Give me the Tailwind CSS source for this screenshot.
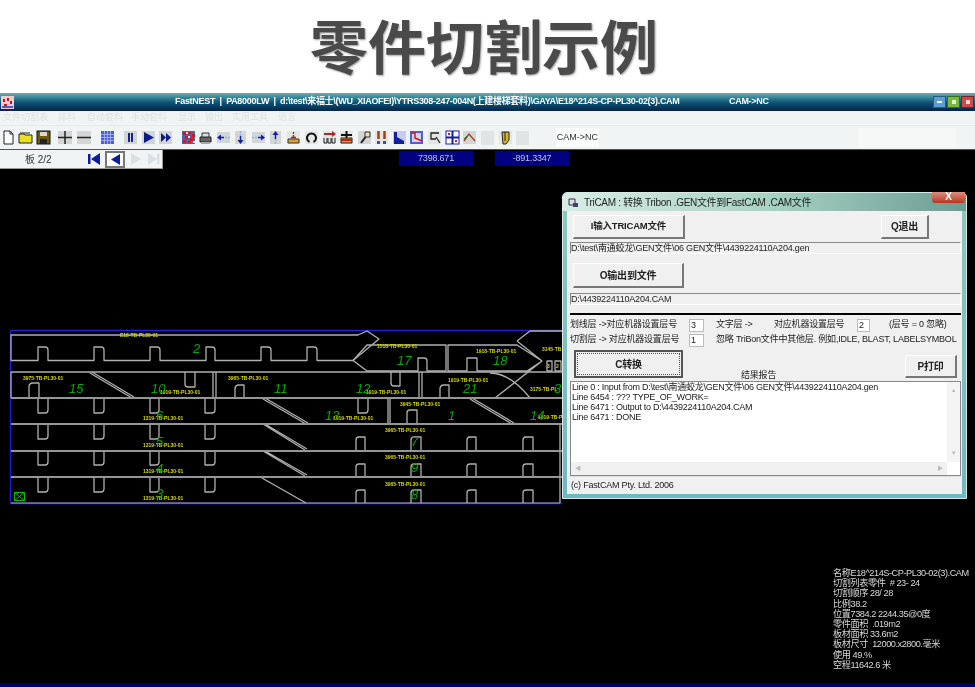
<!DOCTYPE html>
<html lang="zh">
<head>
    <meta charset="UTF-8">
    <meta name="viewport" content="width=device-width, initial-scale=1.0">
    <title>零件切割示例</title>
    <script src="https://cdn.jsdelivr.net/npm/@tailwindcss/browser@4"></script>
</head>
<body class="w-[975px] h-[687px] overflow-hidden bg-white font-['Liberation_Sans','Noto_Sans_CJK_SC',sans-serif]">
<div class="flex flex-col h-[687px]">

    <!-- page heading -->
    <h1 class="h-[93px] flex items-center justify-center pr-[7px] pt-[4px] text-[58px] leading-none font-bold text-[#4a4a4a] [text-shadow:1px_1px_2px_#999]">零件切割示例</h1>

    <!-- FastNEST window -->
    <div class="flex-1 flex flex-col min-h-0 blur-[0.45px]">
        <div class="h-[18px] flex items-center bg-gradient-to-b from-[#63b4b4] via-[#0e5878] to-[#04234a] text-white text-[9px] font-bold">
            <svg class="w-[13px] h-[13px] ml-[1px]" viewBox="0 0 13 13"><rect width="13" height="13" fill="#f3c8d0"/><path d="M2 3h2v3H2zM6 2h2v3H6zM9 5h2v3H9zM3 8h3v2H3z" fill="#c01818"/><path d="M1 10h11v2H1z" fill="#5060c0"/></svg>
            <span class="ml-[161px] whitespace-nowrap w-[554px] tracking-[-0.3px]">FastNEST &nbsp;|&nbsp; PA8000LW &nbsp;|&nbsp; d:\test\来福士\(WU_XIAOFEI)\YTRS308-247-004N(上建楼梯套料)\GAYA\E18^214S-CP-PL30-02(3).CAM</span>
            <span class="tracking-[-0.3px]">CAM-&gt;NC</span>
            <div class="ml-auto mr-[1px] flex gap-px">
                <span class="w-[13px] h-[12px] bg-[#5a9fd0] border border-[#2a5a80] flex items-center justify-center"><i class="w-[5px] h-[2px] bg-white"></i></span>
                <span class="w-[13px] h-[12px] bg-[#7ab840] border border-[#3a7020] flex items-center justify-center"><i class="w-[4px] h-[4px] bg-white/80"></i></span>
                <span class="w-[13px] h-[12px] bg-[#d04848] border border-[#802020] flex items-center justify-center"><i class="w-[4px] h-[4px] bg-white/80"></i></span>
            </div>
        </div>

        <div class="h-[15px] flex items-center bg-[#f0f4f5] text-[9px] text-[#dde2e4] pl-[3px] border-b border-[#e6eaea]">
            <span class="w-[55px]">文件切割表</span><span class="w-[29px]">排料</span><span class="w-[44px]">自动套料</span><span class="w-[47px]">手动套料</span><span class="w-[27px]">显示</span><span class="w-[27px]">输出</span><span class="w-[46px]">实用工具</span><span>语言</span>
        </div>

        <div class="h-[23px] flex items-center bg-[#f0f4f5] pl-[1px]">
            <svg class="w-[15px] h-[15px]" viewBox="0 0 15 15"><path d="M3 1h6l3 3v10H3z" fill="#fff" stroke="#222"/><path d="M9 1v3h3" fill="none" stroke="#222"/></svg>
            <svg class="w-[15px] h-[15px] ml-[2px]" viewBox="0 0 15 15"><path d="M1 4h5l1 1h7v8H1z" fill="#e8e020" stroke="#222"/><path d="M2 3h10" stroke="#222"/></svg>
            <svg class="w-[15px] h-[15px] ml-[3px]" viewBox="0 0 15 15"><rect x="1" y="1" width="13" height="13" fill="#6b5a10" stroke="#111"/><rect x="4" y="2" width="7" height="4" fill="#d8d8c8"/><rect x="4" y="9" width="7" height="5" fill="#222"/></svg>
            <svg class="w-[16px] h-[15px] ml-[6px]" viewBox="0 0 16 15"><rect x="1" y="1" width="14" height="13" fill="#d4d6d6"/><path d="M1 7.500h14M8 1v13" stroke="#222" stroke-width="1.5"/></svg>
            <svg class="w-[16px] h-[15px] ml-[3px]" viewBox="0 0 16 15"><rect x="1" y="1" width="14" height="13" fill="#d4d6d6"/><path d="M1 7.500h14" stroke="#222" stroke-width="1.5"/></svg>
            <svg class="w-[15px] h-[15px] ml-[8px]" viewBox="0 0 15 15"><rect x="1" y="1" width="13" height="13" fill="#5060d8"/><path d="M1 4.500h13M1 7.500h13M1 10.500h13M4.500 1v13M7.500 1v13M10.500 1v13" stroke="#b0b8f0" stroke-width=".8"/></svg>
            <svg class="w-[15px] h-[15px] ml-[8px]" viewBox="0 0 15 15"><rect x="1" y="1" width="13" height="13" fill="#d4d6d6"/><path d="M5 3h2v9H5zM8 3h2v9H8z" fill="#1820a0"/></svg>
            <svg class="w-[15px] h-[15px] ml-[3px]" viewBox="0 0 15 15"><rect x="1" y="1" width="13" height="13" fill="#d4d6d6"/><path d="M3 2l10 5.500-10 5.500z" fill="#0c1c88"/></svg>
            <svg class="w-[15px] h-[15px] ml-[2px]" viewBox="0 0 15 15"><rect x="1" y="1" width="13" height="13" fill="#d4d6d6"/><path d="M3 3l5 4.500-5 4.500zM8 3l5 4.500-5 4.500z" fill="#0c1c88"/></svg>
            <svg class="w-[15px] h-[15px] ml-[8px]" viewBox="0 0 15 15"><rect x="1" y="1" width="13" height="13" fill="#5060b0"/><path d="M2 2h3v3H2zM7 2h3v2H7zM11 4h3v3h-3zM4 6h3v3H4zM9 8h3v3H9zM2 10h3v3H2zM7 11h3v2H7z" fill="#d01818"/><path d="M5 2h2v2H5zM7 6h2v2H7zM12 11h2v2h-2z" fill="#f0d0d0"/></svg>
            <svg class="w-[15px] h-[15px] ml-[2px]" viewBox="0 0 15 15"><path d="M2 7h11v5H2z" fill="#666" stroke="#222"/><path d="M4 3h7v4H4z" fill="#ddd" stroke="#333"/><path d="M3 12h9v2H3z" fill="#aaa"/></svg>
            <svg class="w-[15px] h-[15px] ml-[3px]" viewBox="0 0 15 15"><rect x="1" y="2" width="13" height="11" fill="#d4d6d6"/><path d="M14 7.500H8" stroke="#7ac0e0" stroke-width="1.500" stroke-dasharray="2 1"/><path d="M8 7.500H4" stroke="#1020a0" stroke-width="1.500"/><path d="M1 7.500l4-3v6z" fill="#1020a0"/></svg>
            <svg class="w-[15px] h-[15px] ml-[2px]" viewBox="0 0 15 15"><rect x="2" y="1" width="11" height="13" fill="#d4d6d6"/><path d="M7.500 1v5" stroke="#7ac0e0" stroke-width="1.500" stroke-dasharray="2 1"/><path d="M7.500 6v4" stroke="#1020a0" stroke-width="1.500"/><path d="M7.500 14l-3-4h6z" fill="#1020a0"/></svg>
            <svg class="w-[15px] h-[15px] ml-[3px]" viewBox="0 0 15 15"><rect x="1" y="2" width="13" height="11" fill="#d4d6d6"/><path d="M1 7.500h6" stroke="#7ac0e0" stroke-width="1.500" stroke-dasharray="2 1"/><path d="M7 7.500h4" stroke="#1020a0" stroke-width="1.500"/><path d="M14 7.500l-4-3v6z" fill="#1020a0"/></svg>
            <svg class="w-[15px] h-[15px] ml-[2px]" viewBox="0 0 15 15"><rect x="2" y="1" width="11" height="13" fill="#d4d6d6"/><path d="M7.500 14V9" stroke="#7ac0e0" stroke-width="1.500" stroke-dasharray="2 1"/><path d="M7.500 9V5" stroke="#1020a0" stroke-width="1.500"/><path d="M7.500 1l-3 4h6z" fill="#1020a0"/></svg>
            <svg class="w-[15px] h-[15px] ml-[3px]" viewBox="0 0 15 15"><rect x="1" y="1" width="13" height="13" fill="#e4e6e6"/><path d="M2 9h11v4H2z" fill="#e0a030" stroke="#333"/><path d="M7.500 2v2M7.500 5v2M5 7.500h5" stroke="#a02020" stroke-width="1.300"/></svg>
            <svg class="w-[15px] h-[15px] ml-[3px]" viewBox="0 0 15 15"><rect x="1" y="1" width="13" height="13" fill="#e4e6e6"/><path d="M5.500 12A4.500 4.500 0 1 1 9.500 12" fill="none" stroke="#111" stroke-width="2"/></svg>
            <svg class="w-[15px] h-[15px] ml-[3px]" viewBox="0 0 15 15"><rect x="1" y="1" width="13" height="13" fill="#e4e6e6"/><path d="M2 4h8" stroke="#c02020" stroke-width="2"/><path d="M14 4l-4-3v6z" fill="#c02020"/><path d="M2 8v5h3V8M6 8v5h3V8M10 8v5h3V8" fill="none" stroke="#222"/></svg>
            <svg class="w-[15px] h-[15px] ml-[2px]" viewBox="0 0 15 15"><rect x="1" y="1" width="13" height="13" fill="#e4e6e6"/><path d="M7.500 1v7M2 5h11" stroke="#111" stroke-width="2"/><path d="M2 8h11v5H2z" fill="#e0a020" stroke="#222"/><path d="M2 10h11" stroke="#c02020" stroke-width="2"/></svg>
            <svg class="w-[15px] h-[15px] ml-[3px]" viewBox="0 0 15 15"><rect x="1" y="1" width="13" height="13" fill="#d4d6d6"/><path d="M4 13l6-8" stroke="#222" stroke-width="2"/><path d="M8 2h5v5H8z" fill="#e8e0b0" stroke="#333"/></svg>
            <svg class="w-[15px] h-[15px] ml-[2px]" viewBox="0 0 15 15"><rect x="1" y="1" width="13" height="13" fill="#e4e6e6"/><path d="M4.500 1v8M10.500 1v8" stroke="#a04010" stroke-width="2.500"/><path d="M3 11h3v3H3zM9 11h3v3H9z" fill="#3050c0"/></svg>
            <svg class="w-[15px] h-[15px] ml-[3px]" viewBox="0 0 15 15"><rect x="1" y="1" width="13" height="13" fill="#c8ccf0"/><path d="M2 2h3v5l7 4v3H2z" fill="#1020a0"/></svg>
            <svg class="w-[15px] h-[15px] ml-[2px]" viewBox="0 0 15 15"><rect x="1" y="1" width="13" height="13" fill="#5060d0"/><rect x="3" y="3" width="9" height="9" fill="#d0d4f0"/><path d="M2 3h4v5l7 3" fill="none" stroke="#d01818" stroke-width="1.500"/></svg>
            <svg class="w-[15px] h-[15px] ml-[3px]" viewBox="0 0 15 15"><rect x="1" y="1" width="13" height="13" fill="#e4e6e6"/><path d="M12 3H4v6h5M9 7l4 6" fill="none" stroke="#222" stroke-width="1.300"/></svg>
            <svg class="w-[15px] h-[15px] ml-[3px]" viewBox="0 0 15 15"><rect x="1" y="1" width="13" height="13" fill="#fff" stroke="#1020a0"/><path d="M1 7.500h13M7.500 1v13" stroke="#1020a0" stroke-width="2"/><rect x="3" y="3" width="2" height="2" fill="#d01818"/><rect x="10" y="10" width="2" height="2" fill="#d01818"/></svg>
            <svg class="w-[15px] h-[15px] ml-[2px]" viewBox="0 0 15 15"><rect x="1" y="1" width="13" height="13" fill="#d4d6d6"/><path d="M2 11l5-7 6 7" fill="none" stroke="#a04010" stroke-width="1.300"/><path d="M2 9l3-3" stroke="#208020"/></svg>
            <span class="w-[13px] h-[14px] ml-[4px] bg-[#dfe4e4]"></span>
            <svg class="w-[15px] h-[15px] ml-[4px]" viewBox="0 0 15 15"><rect x="1" y="1" width="13" height="13" fill="#e4e6e6"/><path d="M4 2h7v8l-3 4H5z" fill="#d8b820" stroke="#222"/><path d="M7 2v9" stroke="#222"/></svg>
            <span class="w-[13px] h-[14px] ml-[3px] bg-[#dfe4e4]"></span>
            <span class="w-[43px] h-[19px] ml-[27px] flex items-center justify-center bg-[#fafbfb] text-[9px] text-[#333] whitespace-nowrap">CAM-&gt;NC</span>
            <span class="w-[98px] h-[20px] ml-[259px] bg-[#f6f8f8]"></span>
        </div>

        <!-- black nesting canvas -->
        <div class="flex-1 relative bg-black border-t border-[#555] min-h-0 border-b-[4px] border-b-[#000060]">
            <div class="absolute left-0 top-0 w-[163px] h-[19px] bg-[#f0f4f5] flex items-center border-r border-b border-[#999]">
                <span class="ml-[25px] w-[62px] text-[10px] text-[#333]">板 2/2</span>
                <svg class="w-[14px] h-[12px]" viewBox="0 0 14 12"><path d="M1 1h2.500v10H1zM13 0v12L4 6z" fill="#0c1ca0"/></svg>
                <span class="ml-[4px] w-[20px] h-[17px] flex items-center justify-center border-2 border-[#777] bg-white"><svg class="w-[11px] h-[11px]" viewBox="0 0 11 11"><path d="M10 0v11L1 5.500z" fill="#0c1ca0"/></svg></span>
                <svg class="w-[12px] h-[12px] ml-[5px]" viewBox="0 0 12 12"><path d="M1 0v12l10-6z" fill="#d8e2e4"/></svg>
                <svg class="w-[14px] h-[12px] ml-[5px]" viewBox="0 0 14 12"><path d="M1 0v12l9-6zM10 1h2.500v10H10z" fill="#d8e2e4"/></svg>
            </div>
            <div class="absolute left-[399px] top-[1px] w-[74px] h-[15px] bg-[#000080] text-[#c0c0d8] text-[9px] text-center leading-[14px] tracking-[-0.2px]">7398.671</div>
            <div class="absolute left-[495px] top-[1px] w-[74px] h-[15px] bg-[#000080] text-[#c0c0d8] text-[9px] text-center leading-[14px] tracking-[-0.2px]">-891.3347</div>

            <!-- nested parts, positions are the content -->
            <svg class="absolute left-0 top-[-149px]" width="975" height="687" viewBox="0 0 975 687">
                <path d="M10.500 329.500H562M10.500 329.500V502.500H562" fill="none" stroke="#2020d8" stroke-width="1.300"/>
                <g fill="none" stroke="#b0b0b0" stroke-width="1.300" stroke-linejoin="round">
                    <path d="M11 334H358L367 330 379 338 353 359.500H317V349Q317 346 314 346H307V359.500H271V349Q271 346 268 346H261V359.500H215V349Q215 346 212 346H206V359.500H160V349Q160 346 157 346H150V359.500H104V349Q104 346 101 346H94V359.500H48V349Q48 346 45 346H38V359.500H11Z"/>
                    <path d="M353 359.500L367 344H446V370H427V360Q427 357 424 357H418V370H367L353 359.500"/>
                    <path d="M448 344V370H467V357H477V370H527L542 360 517 344ZM517 340L530 330H562M517 340L542 360 495 397M490 372Q510 372 530 397"/>
                    <path d="M11 371H562M11 371V397M213 371V397M216 371V397M419 371V397M422 371V397M185 371V383Q185 386 188 386H195V371M391 371V382Q391 385 394 385H400V371"/>
                    <path d="M90 372L132 397M92 371L134 396M470 398L512 423M472 397L514 422"/>
                    <path d="M29 397V386Q29 382 33 382H39V397M235 397V388Q235 384 239 384H244V397M440 397V388Q440 384 444 384H449V397"/>
                    <path d="M388 397V423M390 397V423M407 423V412Q407 409 410 409H417V423"/>
                    <path d="M38 397V412H45Q48 412 48 409V397M94 397V412H101Q104 412 104 409V397M150 397V412H156Q159 412 159 409V397M205 397V412H212Q215 412 215 409V397M358 398V412H365Q368 412 368 409V398"/>
                    <path d="M38 423V438H45Q48 438 48 435V423M94 423V438H101Q104 438 104 435V423M150 423V438H156Q159 438 159 435V423M205 423V438H212Q215 438 215 435V423"/>
                    <path d="M38 450V464H45Q48 464 48 461V450M94 450V464H101Q104 464 104 461V450M150 450V464H156Q159 464 159 461V450M205 450V464H212Q215 464 215 461V450"/>
                    <path d="M38 476V491H45Q48 491 48 488V476M94 476V491H101Q104 491 104 488V476M150 476V491H156Q159 491 159 488V476M205 476V491H212Q215 491 215 488V476"/>
                    <path d="M356 450V439Q356 436 359 436H365V450M411 450V439Q411 436 414 436H421V450M467 450V439Q467 436 470 436H476V450M523 450V439Q523 436 526 436H533V450"/>
                    <path d="M356 476V466Q356 463 359 463H365V476M411 476V466Q411 463 414 463H421V476M467 476V466Q467 463 470 463H476V476M523 476V466Q523 463 526 463H533V476"/>
                    <path d="M356 502V492Q356 489 359 489H365V502M411 502V492Q411 489 414 489H421V502M467 502V492Q467 489 470 489H476V502M523 502V492Q523 489 526 489H533V502"/>
                    <path d="M263 398L306 423M265 397L308 422M263 423L305 449M265 423L307 448M263 450L305 475M265 450L307 474M262 477L306 502"/>
                    <path d="M560 423V502M547 360h5v10h-5zM555 360h6v10h-6z"/>
                </g>
                <path d="M11 397H562M11 423H562M11 450H562M11 476H562" stroke="#969696" stroke-width="2"/>
                <path d="M11 502H560" stroke="#b0b0b0"/>
                <g fill="#d8d800" font-size="5" font-weight="bold" font-family="Liberation Sans">
                    <text x="120" y="336">E18-TB-PL30-01</text><text x="377" y="347">1518-TB-PL30-01</text><text x="476" y="352">1918-TB-PL30-01</text><text x="542" y="350">3145-TB</text>
                    <text x="23" y="379">3975-TB-PL30-01</text><text x="228" y="379">3965-TB-PL30-01</text><text x="448" y="381">1919-TB-PL30-01</text><text x="530" y="390">3175-TB-PL</text>
                    <text x="160" y="393">1919-TB-PL30-01</text><text x="366" y="393">1919-TB-PL30-01</text><text x="400" y="405">3945-TB-PL30-01</text>
                    <text x="143" y="419">1319-TB-PL30-01</text><text x="333" y="419">1919-TB-PL30-01</text><text x="538" y="418">1919-TB-PL</text>
                    <text x="143" y="446">1319-TB-PL30-01</text><text x="143" y="472">1319-TB-PL30-01</text><text x="143" y="499">1319-TB-PL30-01</text>
                    <text x="385" y="431">3965-TB-PL30-01</text><text x="385" y="458">3965-TB-PL30-01</text><text x="385" y="485">3965-TB-PL30-01</text>
                    <text x="547" y="367">3</text><text x="556" y="367">2</text>
                </g>
                <g fill="#00a800" font-size="13" font-style="italic" font-family="Liberation Sans">
                    <text x="193" y="352">2</text><text x="69" y="392">15</text><text x="151" y="392">10</text><text x="274" y="392">11</text><text x="356" y="392">12</text><text x="463" y="392">21</text><text x="397" y="364">17</text><text x="493" y="364">18</text><text x="554" y="392">3</text>
                    <text x="325" y="419">13</text><text x="448" y="419">1</text><text x="530" y="419">14</text><text x="156" y="419">6</text><text x="156" y="445">5</text><text x="156" y="472">4</text><text x="156" y="497">3</text><text x="411" y="445">7</text><text x="411" y="471">9</text><text x="411" y="498">8</text>
                </g>
                <path d="M14.500 491.500h10v8h-10zM14.500 491.500l10 8M24.500 491.500l-10 8" fill="none" stroke="#00c000"/>
            </svg>

            <div class="absolute left-[833px] top-[418px] text-[9.2px] leading-[10.2px] text-[#d8d8d8] whitespace-nowrap tracking-[-0.45px]">
                <p>名称E18^214S-CP-PL30-02(3).CAM</p>
                <p>切割列表零件 &nbsp;# 23- 24</p>
                <p>切割顺序 28/ 28</p>
                <p>比例38.2</p>
                <p>位置7384.2 2244.35@0度</p>
                <p>零件面积 &nbsp;.019m2</p>
                <p>板材面积 33.6m2</p>
                <p>板材尺寸 &nbsp;12000.x2800.毫米</p>
                <p>使用 49.%</p>
                <p>空程11642.6 米</p>
            </div>

            <!-- TriCAM dialog -->
            <div class="absolute left-[562px] top-[42px] w-[405px] h-[307px] flex flex-col rounded-t-[5px] bg-gradient-to-b from-[#8cc8bc] to-[#6fb8c0] border border-[#d8e8e4] px-[4px] pb-[4px] text-[9px] tracking-[-0.2px] text-[#222] whitespace-nowrap">
                <div class="h-[18px] flex items-center bg-gradient-to-r from-[#d8ece6] via-[#a8d4c4] to-[#6c9c94] -mx-[4px] px-[4px] rounded-t-[4px] text-[10px] relative">
                    <svg class="w-[11px] h-[11px] ml-[1px] mr-[5px]" viewBox="0 0 11 11"><path d="M1 2h6v6H1z" fill="#dde" stroke="#333"/><path d="M5 6h5v4H5z" fill="#446" /></svg>
                    <span class="tracking-[-0.3px]">TriCAM : 转换 Tribon .GEN文件到FastCAM .CAM文件</span>
                    <span class="absolute right-[1px] top-[-1px] w-[33px] h-[11px] rounded-b-[3px] bg-gradient-to-b from-[#d89080] to-[#b83020] text-white text-[10px] font-bold leading-[10px] text-center">X</span>
                </div>
                <div class="flex-1 flex flex-col bg-[#f0f0f0] pl-[3px] pr-[1px] min-h-0">
                    <div class="flex justify-between pl-[3px] pr-[32px] pt-[4px]">
                        <button class="w-[112px] h-[24px] bg-[#f0f0f0] border border-white border-r-[#777] border-b-[#777] border-r-2 border-b-2 font-bold text-[9.5px]">I输入TRICAM文件</button>
                        <button class="w-[48px] h-[24px] bg-[#f0f0f0] border border-white border-r-[#777] border-b-[#777] border-r-2 border-b-2 font-bold text-[10px]">Q退出</button>
                    </div>
                    <div class="mt-[3px] h-[12px] bg-[#f0f0f0] border-t border-l border-[#888] border-r border-r-white border-b border-b-white leading-[10px]">D:\test\南通蛟龙\GEN文件\06 GEN文件\4439224110A204.gen</div>
                    <button class="ml-[3px] mt-[9px] w-[111px] h-[25px] bg-[#f0f0f0] border border-white border-r-[#777] border-b-[#777] border-r-2 border-b-2 font-bold text-[10px]">O输出到文件</button>
                    <div class="mt-[5px] h-[12px] bg-[#f0f0f0] border-t border-l border-[#888] border-r border-r-white border-b border-b-white leading-[10px]">D:\4439224110A204.CAM</div>
                    <div class="mt-[8px] h-[2px] bg-black"></div>
                    <div class="mt-[3px] flex items-center h-[14px]">
                        <span class="w-[119px]">划线层 -&gt;对应机器设置层号</span>
                        <span class="w-[15px] h-[13px] bg-white border border-[#bbb] leading-[11px] pl-[1px]">3</span>
                        <span class="ml-[12px] w-[58px]">文字层 -&gt;</span>
                        <span class="w-[83px]">对应机器设置层号</span>
                        <span class="w-[13px] h-[13px] bg-white border border-[#bbb] leading-[11px] pl-[1px]">2</span>
                        <span class="ml-[19px]">(层号 = 0 忽略)</span>
                    </div>
                    <div class="mt-[1px] flex items-center h-[14px]">
                        <span class="w-[119px]">切割层 -&gt; 对应机器设置层号</span>
                        <span class="w-[15px] h-[13px] bg-white border border-[#bbb] leading-[11px] pl-[1px]">1</span>
                        <span class="ml-[12px]">忽略 TriBon文件中其他层. 例如,IDLE, BLAST, LABELSYMBOL</span>
                    </div>
                    <div class="flex h-[30px] mt-[3px]">
                        <button class="ml-[4px] w-[109px] h-[28px] bg-[#f0f0f0] border-2 border-[#555] outline-1 outline-dotted -outline-offset-4 outline-[#555] font-bold text-[10px]">C转换</button>
                        <span class="ml-[58px] w-[36px] self-end leading-[12px] mb-[-1px]">结果报告</span>
                        <button class="ml-[128px] mt-[5px] w-[52px] h-[23px] bg-[#f0f0f0] border border-white border-r-[#777] border-b-[#777] border-r-2 border-b-2 font-bold text-[10px]">P打印</button>
                    </div>
                    <div class="mt-[1px] h-[95px] flex flex-col bg-white border border-[#888]">
                        <div class="flex-1 flex min-h-0">
                            <div class="flex-1 px-[1px] leading-[10px] tracking-[-0.25px]">
                                <p>Line 0 : Input from D:\test\南通蛟龙\GEN文件\06 GEN文件\4439224110A204.gen</p>
                                <p>Line 6454 : ??? TYPE_OF_WORK=</p>
                                <p>Line 6471 : Output to D:\4439224110A204.CAM</p>
                                <p>Line 6471 : DONE</p>
                            </div>
                            <div class="w-[13px] flex flex-col justify-between items-center py-[4px] bg-[#f4f4f4] text-[#bbb] text-[6px]"><span>▲</span><span>▼</span></div>
                        </div>
                        <div class="h-[13px] flex justify-between items-center px-[4px] mr-[13px] bg-[#f0f0f0] text-[#bbb] text-[6px]"><span>◀</span><span>▶</span></div>
                    </div>
                    <div class="flex-1 flex items-center pl-[1px] border-t border-[#ddd]">(c) FastCAM Pty. Ltd. 2006</div>
                </div>
            </div>
        </div>
    </div>
</div>
</body>
</html>
